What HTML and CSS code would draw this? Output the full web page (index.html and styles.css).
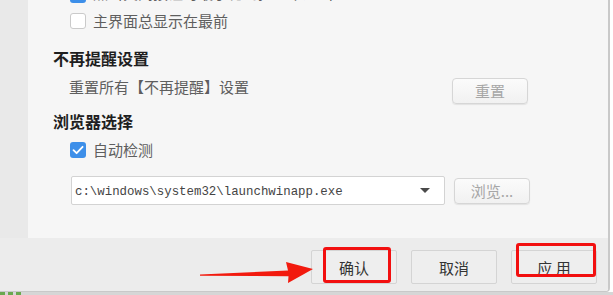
FILE: index.html
```html
<!DOCTYPE html>
<html lang="zh-CN">
<head>
<meta charset="utf-8">
<link rel="stylesheet" href="styles.css">
</head>
<body>
<div class="window">
  <div class="top">
    <div class="sidebar"></div>
    <div class="content">
      <div class="check-row first">
        <span class="box checked"><svg viewBox="0 0 16 16"><path d="M3.5 8.2 L6.6 11.2 L12.6 4.8" fill="none" stroke="#fff" stroke-width="1.8" stroke-linecap="round" stroke-linejoin="round"/></svg></span>
        <span class="label">点击关闭按钮时最小化到托盘不退出</span>
      </div>
      <div class="check-row second">
        <span class="box"></span>
        <span class="label">主界面总显示在最前</span>
      </div>
      <h2 class="heading h-remind">不再提醒设置</h2>
      <div class="reset-row">
        <span class="label">重置所有【不再提醒】设置</span>
        <button class="btn-soft">重置</button>
      </div>
      <h2 class="heading h-browser">浏览器选择</h2>
      <div class="check-row third">
        <span class="box checked"><svg viewBox="0 0 16 16"><path d="M3.5 8.2 L6.6 11.2 L12.6 4.8" fill="none" stroke="#fff" stroke-width="1.8" stroke-linecap="round" stroke-linejoin="round"/></svg></span>
        <span class="label">自动检测</span>
      </div>
      <div class="combo-row">
        <div class="combo">
          <span class="path">c:\windows\system32\launchwinapp.exe</span>
          <span class="caret"></span>
        </div>
        <button class="btn-soft browse">浏览...</button>
      </div>
    </div>
  </div>
  <div class="footer">
    <button class="btn">确认</button>
    <button class="btn">取消</button>
    <button class="btn">应 用</button>
  </div>
  <div class="mark mark-ok"></div>
  <div class="mark mark-apply"></div>
  <svg class="arrow" viewBox="0 0 114 24" width="114" height="24">
    <path d="M0 13.6 L88 9.5 L86 1 L113 8 L88 22 L88.5 15.2 L0 14.8 Z" fill="#f21a0e"/>
  </svg>
</div>
<div class="taskbar">
  <span class="tb g1"></span><span class="tb g2"></span><span class="tb g3"></span>
</div>
</body>
</html>
```

FILE: styles.css
```css
html, body {
  margin: 0;
  padding: 0;
  background: #ffffff;
  overflow: hidden;
  width: 613px;
  height: 295px;
}
body {
  font-family: "Noto Sans CJK SC", "Noto Sans", sans-serif;
  color: #555;
}
.window {
  position: relative;
  width: 608px;
  border-right: 2px solid #c9c9c9;
  border-bottom: 1px solid #c9c9c9;
  border-bottom-right-radius: 4px;
  overflow: hidden;
}
.top {
  display: flex;
  height: 238px;
}
.sidebar {
  width: 28px;
  background: #e9e9e9;
}
.content {
  flex: 1;
  background: #f6f6f6;
  padding-left: 25px;
}
.check-row {
  display: flex;
  align-items: center;
  gap: 7px;
  height: 16px;
  padding-left: 17px;
}
.check-row.first { margin-top: -13px; }
.check-row.first .label { margin-top: -4px; }
.check-row.second { margin-top: 10px; }
.check-row.third { margin-top: 10px; height: 17px; }
.box {
  width: 14px;
  height: 14px;
  border: 1px solid #cacaca;
  border-radius: 3px;
  background: #fff;
  flex: none;
}
.box.checked {
  width: 16px;
  height: 16px;
  border: none;
  background: #3d8fe9;
  display: flex;
}
.box svg { width: 16px; height: 16px; }
.label {
  font-size: 15px;
  line-height: 20px;
  color: #5e5e5e;
  white-space: nowrap;
}
.heading {
  margin: 0;
  font-size: 16px;
  line-height: 20px;
  font-weight: 700;
  color: #1f1f1f;
}
.h-remind { margin-top: 19px; }
.h-browser { margin-top: 7px; }
.reset-row {
  display: flex;
  justify-content: space-between;
  align-items: flex-start;
  width: 459px;
  padding-left: 16px;
  margin-top: 10px;
}
.reset-row .label { margin-top: -1px; }
.btn-soft {
  width: 76px;
  height: 26px;
  border: 1px solid #d6d6d6;
  border-radius: 4px;
  background: linear-gradient(#fbfbfb, #f1f1f1);
  box-shadow: 0 1px 1px rgba(0,0,0,0.08);
  font-family: "Noto Sans CJK SC", sans-serif;
  font-size: 15px;
  line-height: 22px;
  color: #a6a6a6;
  padding: 0;
}
.combo-row {
  display: flex;
  align-items: center;
  gap: 9px;
  margin-top: 18px;
  padding-left: 18px;
}
.combo {
  height: 27px;
  border: 1px solid #d3d3d3;
  border-radius: 2px;
  background: #fff;
  display: flex;
  align-items: center;
  justify-content: space-between;
  padding: 0 14px 0 3px;
  box-sizing: content-box;
  width: 355px;
}
.path {
  font-family: "Liberation Mono", monospace;
  font-size: 12.4px;
  color: #444;
  padding-top: 2px;
}
.caret {
  width: 0;
  height: 0;
  border-left: 5px solid transparent;
  border-right: 5px solid transparent;
  border-top: 5px solid #4a4a4a;
}
.browse { height: 26px; }
.footer {
  display: flex;
  justify-content: flex-end;
  align-items: flex-start;
  gap: 14px;
  height: 53px;
  padding: 12px 11px 0 0;
  box-sizing: border-box;
  background: #ececec;
}
.btn {
  width: 86px;
  height: 34px;
  border: 1px solid #d4d4d4;
  border-radius: 2px;
  background: #eeeeee;
  font-family: "Noto Sans CJK SC", sans-serif;
  font-size: 15px;
  color: #333;
  padding: 0;
}
.mark {
  position: absolute;
  border: 3px solid #f20f0f;
  border-radius: 3px;
  box-sizing: border-box;
}
.mark-ok { left: 323px; top: 247px; width: 68px; height: 36px; }
.mark-apply { left: 516px; top: 243px; width: 80px; height: 34px; }
.arrow {
  position: absolute;
  left: 200px;
  top: 261px;
}
.taskbar {
  height: 3px;
  background: #d6d6d6;
  display: flex;
  gap: 3px;
}
.tb { width: 5px; height: 3px; background: #6aa84f; }
```
